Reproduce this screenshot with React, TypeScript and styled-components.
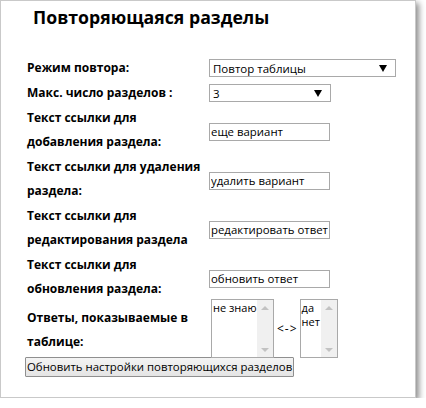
import React from "react";
import styled, { createGlobalStyle } from "styled-components";

const Global = createGlobalStyle`
  html, body { margin: 0; padding: 0; background: #fff; }
  body { font-family: "Open Sans", "Noto Sans", sans-serif; color: #000; }
`;

const Panel = styled.div`
  box-sizing: border-box;
  width: 416px;
  height: 398px;
  background: #fff;
  border: 1px solid #c9c9c9;
  box-shadow: 3px 3px 6px rgba(0, 0, 0, 0.45);
  padding: 1px 0 0 26px;
`;

const Title = styled.h2`
  margin: 0 0 23px 6px;
  font-size: 17.7px;
  font-weight: 700;
  line-height: 30px;
`;

const FormTable = styled.table`
  border-collapse: separate;
  border-spacing: 0 1px;
`;

const Label = styled.td`
  width: 182px;
  padding: 0;
  font-size: 12px;
  font-weight: 700;
  line-height: 24px;
  vertical-align: middle;
`;

const Field = styled.td`
  padding: 0;
  vertical-align: middle;
`;

const SelectBox = styled.div<{ $w: number }>`
  box-sizing: border-box;
  width: ${(p) => p.$w}px;
  height: 18px;
  border: 1px solid #a9a9a9;
  display: flex;
  align-items: center;
  justify-content: space-between;
  padding: 0 8px 0 3px;
  font-size: 11.5px;
  background: #fff;
`;

const Arrow = styled.span`
  width: 0;
  height: 0;
  border-left: 4px solid transparent;
  border-right: 4px solid transparent;
  border-top: 7px solid #000;
`;

const TextInput = styled.input`
  box-sizing: border-box;
  width: 121px;
  height: 18px;
  border: 1px solid #a9a9a9;
  padding: 0 1px;
  margin: 0;
  font-family: "Open Sans", "Noto Sans", sans-serif;
  font-size: 11.4px;
  color: #000;
  outline: none;
`;

const ListPair = styled.div`
  display: flex;
  align-items: center;
  padding-left: 2px;
  margin-top: -3px;
`;

const ListBox = styled.div<{ $w: number }>`
  box-sizing: border-box;
  flex: none;
  width: ${(p) => p.$w}px;
  height: 59px;
  border: 1px solid #a9a9a9;
  display: flex;
  background: #fff;
`;

const Options = styled.div`
  flex: 1;
  min-width: 0;
  font-size: 11px;
  line-height: 14px;
  padding: 1px 0 0 1px;
  overflow: hidden;
  white-space: nowrap;
`;

const ScrollTrack = styled.div`
  flex: none;
  width: 16px;
  background: #f0f0f0;
  display: flex;
  flex-direction: column;
  justify-content: space-between;
  align-items: center;
  padding: 6px 0 5px;
  box-sizing: border-box;
`;

const ScrollArrow = styled.span<{ $down?: boolean }>`
  width: 0;
  height: 0;
  border-left: 4px solid transparent;
  border-right: 4px solid transparent;
  ${(p) =>
    p.$down ? "border-top: 4px solid #c2c2c2;" : "border-bottom: 4px solid #c2c2c2;"}
`;

const Swap = styled.span`
  flex: none;
  font-size: 12px;
  letter-spacing: 1px;
  margin: 0 2px 0 3px;
`;

const Button = styled.button`
  display: block;
  margin: -2px 0 0 -2px;
  height: 20px;
  padding: 0 1px;
  border: 1px solid #8f8f8f;
  border-radius: 1px;
  background: linear-gradient(#f4f4f4, #e4e4e4);
  font-family: "Open Sans", "Noto Sans", sans-serif;
  font-size: 11.4px;
  color: #000;
  line-height: 16px;
`;

const List = ({ w, items }: { w: number; items: string[] }) => (
  <ListBox $w={w}>
    <Options>
      {items.map((i) => (
        <div key={i}>{i}</div>
      ))}
    </Options>
    <ScrollTrack>
      <ScrollArrow />
      <ScrollArrow $down />
    </ScrollTrack>
  </ListBox>
);

const rows: [React.ReactNode, string][] = [
  [<>Текст ссылки для<br />добавления раздела:</>, "еще вариант"],
  [<>Текст ссылки для удаления<br />раздела:</>, "удалить вариант"],
  [<>Текст ссылки для<br />редактирования раздела</>, "редактировать ответ"],
  [<>Текст ссылки для<br />обновления раздела:</>, "обновить ответ"],
];

export default function App() {
  return (
    <>
      <Global />
      <Panel>
        <Title>Повторяющаяся разделы</Title>
        <FormTable>
          <tbody>
            <tr>
              <Label>Режим повтора:</Label>
              <Field>
                <SelectBox $w={187}>
                  <span>Повтор таблицы</span>
                  <Arrow />
                </SelectBox>
              </Field>
            </tr>
            <tr>
              <Label>Макс. число разделов :</Label>
              <Field>
                <SelectBox $w={122}>
                  <span>3</span>
                  <Arrow />
                </SelectBox>
              </Field>
            </tr>
            {rows.map(([l, v], i) => (
              <tr key={i}>
                <Label>{l}</Label>
                <Field>
                  <TextInput defaultValue={v} />
                </Field>
              </tr>
            ))}
            <tr>
              <Label>
                Ответы, показываемые в<br />таблице:
              </Label>
              <Field>
                <ListPair>
                  <List w={63} items={["не знаю"]} />
                  <Swap>&lt;-&gt;</Swap>
                  <List w={38} items={["да", "нет"]} />
                </ListPair>
              </Field>
            </tr>
          </tbody>
        </FormTable>
        <Button>Обновить настройки повторяющихся разделов</Button>
      </Panel>
    </>
  );
}
